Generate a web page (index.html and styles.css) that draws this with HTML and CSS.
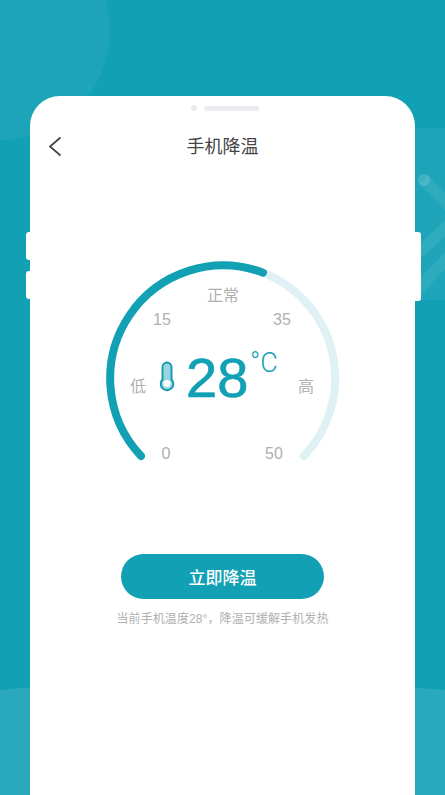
FILE: index.html
```html
<!DOCTYPE html>
<html lang="zh-CN">
<head>
  <meta charset="UTF-8">
  <meta name="viewport" content="width=device-width, initial-scale=1.0">
  <title>手机降温</title>
  <link rel="stylesheet" href="styles.css">
</head>
<body>
  <div class="screen">
    <!-- background decoration -->
    <div class="bg-circle"></div>
    <div class="bg-wave"></div>
    <svg class="bg-pattern" width="30" height="172" viewBox="0 0 30 172">
      <rect width="30" height="172" fill="#fff" opacity="0.06"/>
      <circle cx="9" cy="52" r="6" fill="#fff" opacity="0.14"/>
      <path d="M9 52L44 88L0 128M44 118L0 164" fill="none" stroke="#fff" stroke-width="12" opacity="0.07"/>
    </svg>

    <div class="card">
      <span class="tab tab-left-1"></span>
      <span class="tab tab-left-2"></span>
      <span class="tab tab-right"></span>

      <div class="speaker">
        <span class="speaker-dot"></span>
        <span class="speaker-bar"></span>
      </div>

      <div class="header">
        <svg class="back" width="14" height="21" viewBox="0 0 14 21">
          <path d="M12.5 1.5L2 10.5L12.5 19.5" fill="none" stroke="#444" stroke-width="1.7"/>
        </svg>
        <h1 class="title">手机降温</h1>
      </div>

      <svg class="gauge" width="245" height="220" viewBox="100 250 245 220">
        <path class="arc-track" d="M263 272.7A113 113 0 0 1 304 456"/>
        <path class="arc-value" d="M141 456A113 113 0 0 1 263 272.7"/>
        <text class="mark" x="223" y="301">正常</text>
        <text class="mark" x="162" y="325">15</text>
        <text class="mark" x="282" y="325">35</text>
        <text class="mark" x="138" y="392">低</text>
        <text class="mark" x="306" y="392">高</text>
        <text class="mark" x="166" y="459">0</text>
        <text class="mark" x="274" y="459">50</text>
        <path d="M162.5 379.5V367a4.5 4.5 0 0 1 9 0V379.5a6.3 6.3 0 1 1 -9 0Z" fill="#9bd6e0" stroke="#1199ae" stroke-width="1.9"/>
        <circle cx="167" cy="383.5" r="3.6" fill="#fff"/>
        <text class="temp" x="186" y="397">28</text>
        <text class="unit" x="250" y="372">°C</text>
      </svg>

      <button class="cool-btn">立即降温</button>
      <p class="note">当前手机温度28°，降温可缓解手机发热</p>
    </div>
  </div>
</body>
</html>
```

FILE: styles.css
```css
html, body {
  margin: 0;
  height: 100%;
}

body {
  font-family: "Liberation Sans", "Noto Sans CJK SC", sans-serif;
  overflow: hidden;
}

.screen {
  position: relative;
  width: 445px;
  height: 795px;
  padding-top: 96px;
  box-sizing: border-box;
  background: #12a0b5;
  overflow: hidden;
}

.bg-circle {
  position: absolute;
  left: -110px;
  top: -80px;
  width: 220px;
  height: 220px;
  border-radius: 50%;
  background: rgba(255, 255, 255, 0.05);
}

.bg-wave {
  position: absolute;
  left: -778px;
  top: 680px;
  width: 2000px;
  height: 800px;
  border-radius: 50%;
  background: rgba(255, 255, 255, 0.1);
}

.bg-pattern {
  position: absolute;
  left: 415px;
  top: 128px;
}

.card {
  position: relative;
  display: flex;
  flex-direction: column;
  align-items: center;
  width: 385px;
  height: 699px;
  margin-left: 30px;
  background: #fff;
  border-radius: 30px 30px 0 0;
}

.tab {
  position: absolute;
  background: #fff;
}

.tab-left-1 {
  left: -4px;
  top: 136px;
  width: 4px;
  height: 28px;
  border-radius: 3px 0 0 3px;
}

.tab-left-2 {
  left: -4px;
  top: 175px;
  width: 4px;
  height: 28px;
  border-radius: 3px 0 0 3px;
}

.tab-right {
  right: -6px;
  top: 136px;
  width: 6px;
  height: 69px;
  border-radius: 0 3px 3px 0;
}

.speaker {
  display: flex;
  align-items: center;
  gap: 7px;
  height: 6px;
  margin-top: 9px;
  margin-left: 5px;
}

.speaker-dot {
  width: 6px;
  height: 6px;
  border-radius: 50%;
  background: #e9ebef;
}

.speaker-bar {
  width: 55px;
  height: 5px;
  border-radius: 3px;
  background: #e9ebef;
}

.header {
  position: relative;
  display: flex;
  justify-content: center;
  width: 100%;
  margin-top: 24px;
}

.back {
  position: absolute;
  left: 18px;
  top: 1px;
}

.title {
  margin: 0;
  font-size: 18px;
  font-weight: 400;
  line-height: 24px;
  color: #444;
}

.gauge {
  display: block;
  margin-top: 91px;
}

.arc-track,
.arc-value {
  fill: none;
  stroke-width: 8;
  stroke-linecap: round;
}

.arc-track {
  stroke: #dff1f4;
}

.arc-value {
  stroke: #12a0b5;
}

.mark {
  font-size: 16px;
  fill: #b0b0b0;
  text-anchor: middle;
}

.temp {
  font-size: 56px;
  fill: #12a0b5;
  stroke: #12a0b5;
  stroke-width: 0.7;
}

.unit {
  font-family: Roboto, sans-serif;
  font-size: 27px;
  font-weight: 300;
  fill: #12a0b5;
}

.cool-btn {
  width: 203px;
  height: 45px;
  margin-top: 84px;
  padding: 0;
  border: none;
  border-radius: 23px;
  background: #12a0b5;
  color: #fff;
  font-family: inherit;
  font-size: 17px;
  font-weight: 500;
}

.note {
  margin: 11px 0 0;
  font-size: 12px;
  line-height: 18px;
  letter-spacing: 0.1px;
  color: #b0b0b0;
}
```
